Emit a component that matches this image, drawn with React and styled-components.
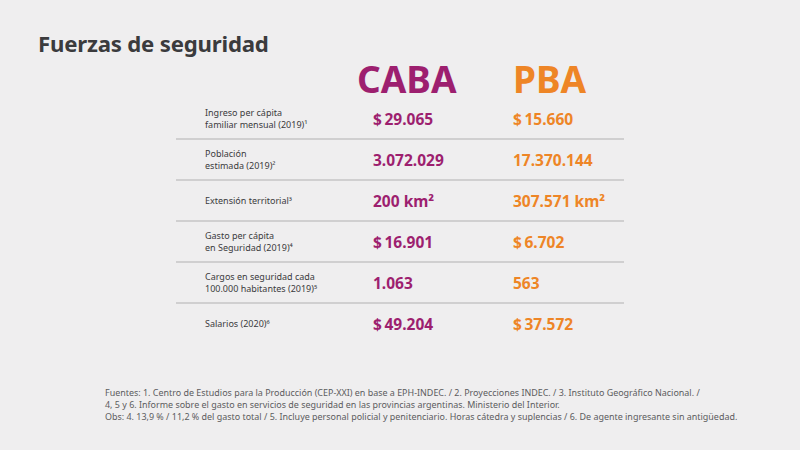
import React from "react";
import styled, { createGlobalStyle } from "styled-components";

const GlobalStyle = createGlobalStyle`
    html, body {
        margin: 0;
        padding: 0;
        background: #efeeef;
    }
`;

const Page = styled.div`
    width: 800px;
    height: 450px;
    box-sizing: border-box;
    padding-top: 28px;
    background: #efeeef;
    font-family: "Noto Sans", "Open Sans", sans-serif;
    overflow: hidden;
`;

const Title = styled.h1`
    margin: 0 0 0 38px;
    font-size: 22.2px;
    line-height: 31px;
    font-weight: 700;
    color: #3b3b3d;
    letter-spacing: -0.2px;
`;

const HeadRow = styled.div`
    display: flex;
    margin: 0 0 0 357px;
    height: 40px;
    align-items: center;
`;

const Region = styled.div`
    width: ${p => p.$w}px;
    font-size: 37px;
    font-weight: 700;
    line-height: 40px;
    color: ${p => p.$color};
`;

const Table = styled.div`
    margin: 0 0 0 176px;
    width: 448px;
`;

const Row = styled.div`
    display: grid;
    grid-template-columns: 197px 140px 1fr;
    align-items: center;
    height: 39px;
    border-bottom: 2px solid ${p => (p.$last ? "transparent" : "#d0cfd0")};
`;

const Label = styled.div`
    padding-left: 29px;
    font-size: 9px;
    line-height: 12px;
    color: #3b3b3d;
`;

const Value = styled.div`
    font-size: 15.5px;
    font-weight: 700;
    color: ${p => p.$color};
`;

const Notes = styled.div`
    margin: 42px 0 0 105px;
    font-size: 8.95px;
    line-height: 12px;
    color: #5c5c5e;
`;

const CABA = "#9d1f6f";
const PBA = "#ee8526";

const rows = [
    { label: ["Ingreso per cápita", "familiar mensual (2019)¹"], caba: "$\u200929.065", pba: "$\u200915.660" },
    { label: ["Población", "estimada (2019)²"], caba: "3.072.029", pba: "17.370.144" },
    { label: ["Extensión territorial³"], caba: "200 km²", pba: "307.571 km²" },
    { label: ["Gasto per cápita", "en Seguridad (2019)⁴"], caba: "$\u200916.901", pba: "$\u20096.702" },
    { label: ["Cargos en seguridad cada", "100.000 habitantes (2019)⁵"], caba: "1.063", pba: "563" },
    { label: ["Salarios (2020)⁶"], caba: "$\u200949.204", pba: "$\u200937.572" },
];

const App = () => {
    return (
        <>
            <GlobalStyle />
            <Page>
                <Title>Fuerzas de seguridad</Title>
                <HeadRow>
                    <Region $w={156} $color={CABA}>CABA</Region>
                    <Region $w={100} $color={PBA}>PBA</Region>
                </HeadRow>
                <Table>
                    {rows.map((r, i) => (
                        <Row key={i} $last={i === rows.length - 1}>
                            <Label>
                                {r.label.map((l, j) => <div key={j}>{l}</div>)}
                            </Label>
                            <Value $color={CABA}>{r.caba}</Value>
                            <Value $color={PBA}>{r.pba}</Value>
                        </Row>
                    ))}
                </Table>
                <Notes>
                    <div>Fuentes: 1. Centro de Estudios para la Producción (CEP-XXI) en base a EPH-INDEC. / 2. Proyecciones INDEC. / 3. Instituto Geográfico Nacional. /</div>
                    <div>4, 5 y 6. Informe sobre el gasto en servicios de seguridad en las provincias argentinas. Ministerio del Interior.</div>
                    <div>Obs: 4. 13,9 % / 11,2 % del gasto total / 5. Incluye personal policial y penitenciario. Horas cátedra y suplencias / 6. De agente ingresante sin antigüedad.</div>
                </Notes>
            </Page>
        </>
    );
};

export default App;
